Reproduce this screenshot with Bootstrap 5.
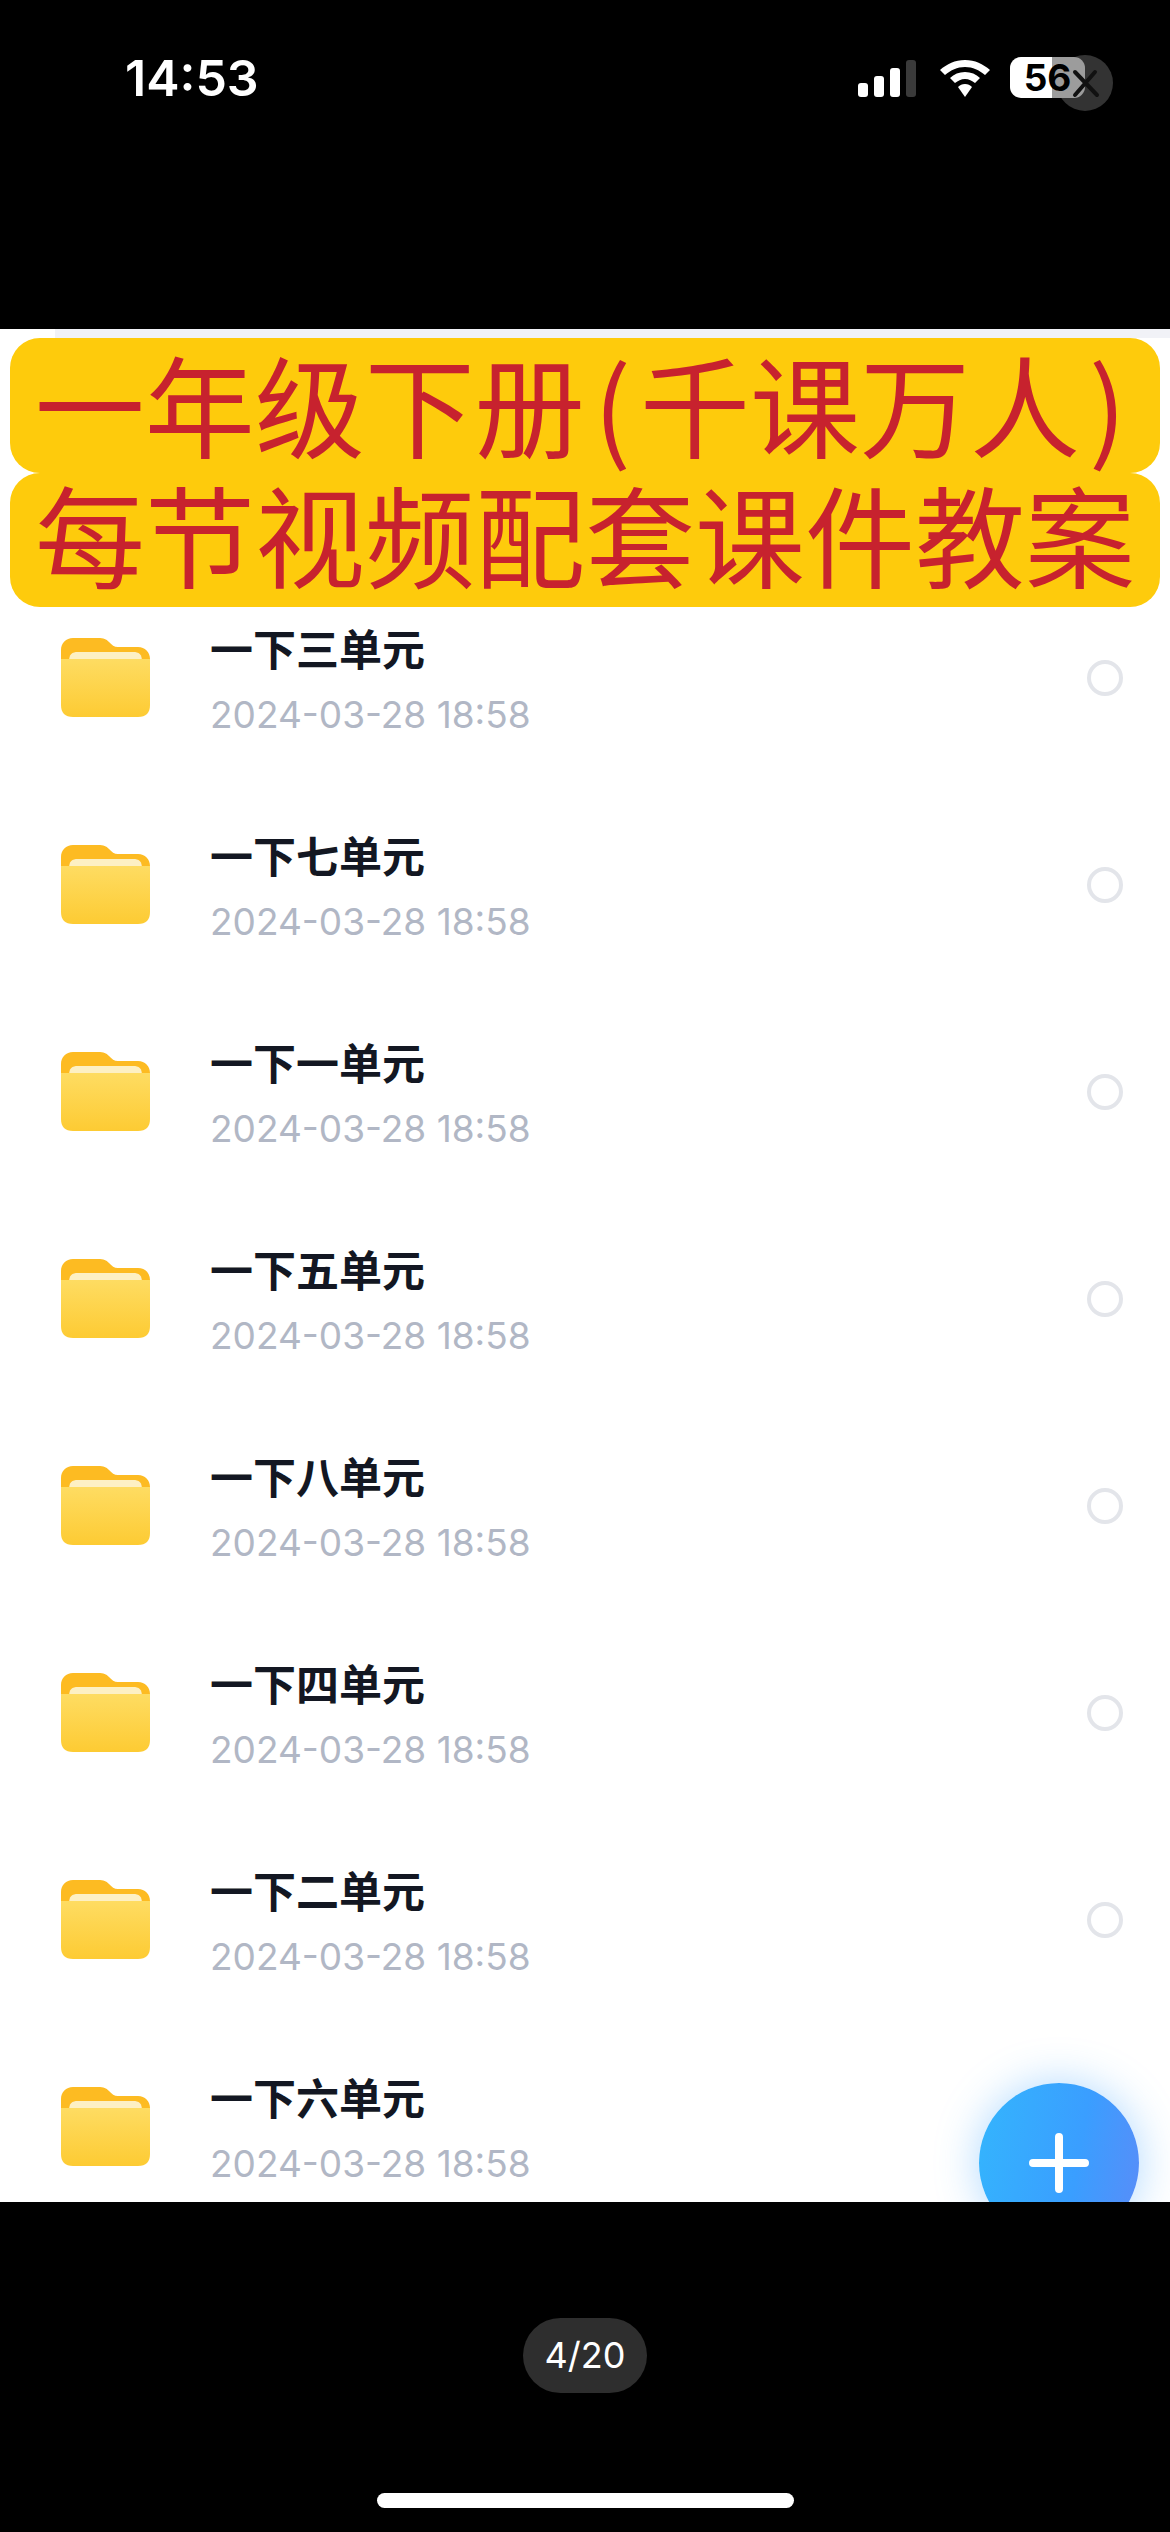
<!DOCTYPE html>
<html lang="zh-CN">

<head>
    <meta charset="UTF-8">
    <meta name="viewport" content="width=device-width, initial-scale=1.0">
    <title>一年级下册</title>
    <link href="https://cdn.jsdelivr.net/npm/bootstrap@5.3.0/dist/css/bootstrap.min.css" rel="stylesheet">
    <style>
        body {
            background-color: #000;
            width: 1170px;
            height: 2532px;
            overflow: hidden;
            font-family: "Inter", "Noto Sans CJK SC", sans-serif;
        }

        .status-area {
            height: 329px;
            padding: 48px 0 0 125px;
            position: relative;
        }

        .clock {
            color: #fff;
            font-size: 50px;
            line-height: 60px;
            font-weight: 600;
            width: 733px;
        }

        .status-icons {
            height: 60px;
        }

        .battery-pill {
            width: 75px;
            height: 41px;
            margin-left: 20px;
            margin-top: -2px;
            border-radius: 11px;
            background: linear-gradient(to right, #fff 56%, #9c9c9c 56%);
            color: #000;
            font-size: 37px;
            font-weight: 700;
            line-height: 41px;
            text-align: center;
            position: relative;
            z-index: 2;
        }

        .close-dot {
            position: absolute;
            left: 1057px;
            top: 55px;
            width: 56px;
            height: 56px;
            border-radius: 50%;
            background-color: #333;
        }

        .close-x {
            position: absolute;
            left: 1057px;
            top: 55px;
            z-index: 3;
        }

        .screen-panel {
            height: 1873px;
            background-color: #fff;
            overflow: hidden;
            position: relative;
        }

        .panel-edge {
            position: absolute;
            left: 55px;
            right: 0;
            top: 0;
            height: 9px;
            background-color: #f1f2f7;
        }

        .promo {
            position: absolute;
            left: 10px;
            top: 9px;
            width: 1150px;
            z-index: 2;
        }

        .promo-line {
            background-color: #fecb0c;
            color: #c7222e;
            border-radius: 30px;
            font-family: "Noto Sans CJK SC", sans-serif;
            font-size: 110px;
            font-weight: 400;
            text-align: center;
            white-space: nowrap;
        }

        .promo-top {
            height: 135px;
            line-height: 128px;
        }

        .promo-bottom {
            height: 134px;
            line-height: 118px;
        }

        .promo-paren {
            padding: 0 9px;
        }

        .folder-list {
            padding-top: 245px;
        }

        .folder-row {
            height: 207px;
            padding: 0 47px 0 61px;
            border: 0;
        }

        .folder-icon {
            width: 89px;
            height: 79px;
            margin-right: 60px;
            flex: none;
        }

        .folder-text {
            padding-top: 6px;
        }

        .folder-name {
            color: #131722;
            font-family: "Noto Sans CJK SC", sans-serif;
            font-size: 43px;
            font-weight: 600;
            line-height: 50px;
            margin-bottom: 18px;
        }

        .folder-date {
            color: #b1b7c5;
            font-family: "Inter", sans-serif;
            font-size: 37px;
            line-height: 50px;
        }

        .folder-row .form-check-input {
            width: 36px;
            height: 36px;
            margin: 0;
            border: 4px solid #e3e5ea;
            background-color: #fff;
        }

        .add-fab {
            position: absolute;
            left: 979px;
            top: 1754px;
            width: 160px;
            height: 160px;
            border: 0;
            padding: 0;
            border-radius: 50%;
            background: linear-gradient(100deg, #34b5fd, #3a9eff 60%, #5a8cf8);
            box-shadow: 0 0 44px rgba(58, 160, 255, .4);
            z-index: 3;
        }

        .bottom-area {
            height: 330px;
            padding-top: 116px;
        }

        .page-pill {
            width: 124px;
            height: 75px;
            background-color: #2e2e2e;
            color: #fff;
            font-size: 36px;
            line-height: 75px;
            text-align: center;
            margin-left: 523px;
        }

        .home-bar {
            width: 417px;
            height: 15px;
            background-color: #fff;
            margin: 100px 0 0 377px;
        }
    </style>
</head>

<body class="m-0">
    <svg width="0" height="0" class="position-absolute">
        <defs>
            <linearGradient id="folderFront" x1="0" y1="0" x2="0" y2="1">
                <stop offset="0" stop-color="#fedc62" />
                <stop offset="1" stop-color="#fdcb33" />
            </linearGradient>
            <symbol id="folder" viewBox="0 0 89 79">
                <path fill="#fdbb22" d="M0 40V12C0 5 5 0 12 0h25c6 0 8 1 11 4 3 3 5 5 9 5h20c7 0 12 5 12 12v19z" />
                <path fill="#fdf0c4" d="M8 24c0-8 3-10 9-10h55c6 0 9 2 9 10v2H8z" />
                <path fill="url(#folderFront)" d="M0 21h89v46c0 8-4 12-12 12H12C4 79 0 75 0 67z" />
            </symbol>
        </defs>
    </svg>

    <div class="status-area d-flex align-items-start">
        <div class="clock">14:53</div>
        <div class="status-icons d-flex align-items-center">
            <svg width="58" height="37" viewBox="0 0 58 37" class="d-block">
                <rect x="0" y="23" width="10" height="14" rx="3" fill="#fff" />
                <rect x="16" y="16" width="10" height="21" rx="3" fill="#fff" />
                <rect x="32" y="8" width="10" height="29" rx="3" fill="#fff" />
                <rect x="48" y="0" width="10" height="37" rx="3" fill="#3a3a3a" />
            </svg>
            <svg width="50" height="37" viewBox="0 0 50 37" class="d-block ms-4">
                <path fill="#fff" d="M25 0c10 0 18 4 25 10l-5 5C39 10 33 7 25 7S11 10 5 15l-5-5C7 4 15 0 25 0z" />
                <path fill="#fff" d="M25 12c6 0 11 2 15 6l-5 5c-3-2-6-4-10-4s-7 2-10 4l-5-5c4-4 9-6 15-6z" />
                <path fill="#fff" d="M25 24c3 0 5 1 7 3L25 37l-7-10c2-2 4-3 7-3z" />
            </svg>
            <div class="battery-pill">56</div>
        </div>
        <div class="close-dot"></div>
        <svg class="close-x" width="56" height="56" viewBox="0 0 56 56">
            <path d="M18 17l22 23M38 17L18 40" stroke="#111" stroke-width="4" stroke-linecap="round" fill="none" />
        </svg>
    </div>

    <div class="screen-panel">
        <div class="panel-edge"></div>
        <div class="promo">
            <div class="promo-line promo-top">一年级下册<span class="promo-paren">(</span>千课万人<span class="promo-paren">)</span></div>
            <div class="promo-line promo-bottom">每节视频配套课件教案</div>
        </div>

        <div class="list-group list-group-flush folder-list">
            <div class="list-group-item d-flex align-items-center folder-row">
                <svg class="folder-icon"><use href="#folder" /></svg>
                <div class="flex-grow-1 folder-text">
                    <div class="folder-name">一下三单元</div>
                    <div class="folder-date">2024-03-28 18:58</div>
                </div>
                <input class="form-check-input" type="radio" name="pick">
            </div>
            <div class="list-group-item d-flex align-items-center folder-row">
                <svg class="folder-icon"><use href="#folder" /></svg>
                <div class="flex-grow-1 folder-text">
                    <div class="folder-name">一下七单元</div>
                    <div class="folder-date">2024-03-28 18:58</div>
                </div>
                <input class="form-check-input" type="radio" name="pick">
            </div>
            <div class="list-group-item d-flex align-items-center folder-row">
                <svg class="folder-icon"><use href="#folder" /></svg>
                <div class="flex-grow-1 folder-text">
                    <div class="folder-name">一下一单元</div>
                    <div class="folder-date">2024-03-28 18:58</div>
                </div>
                <input class="form-check-input" type="radio" name="pick">
            </div>
            <div class="list-group-item d-flex align-items-center folder-row">
                <svg class="folder-icon"><use href="#folder" /></svg>
                <div class="flex-grow-1 folder-text">
                    <div class="folder-name">一下五单元</div>
                    <div class="folder-date">2024-03-28 18:58</div>
                </div>
                <input class="form-check-input" type="radio" name="pick">
            </div>
            <div class="list-group-item d-flex align-items-center folder-row">
                <svg class="folder-icon"><use href="#folder" /></svg>
                <div class="flex-grow-1 folder-text">
                    <div class="folder-name">一下八单元</div>
                    <div class="folder-date">2024-03-28 18:58</div>
                </div>
                <input class="form-check-input" type="radio" name="pick">
            </div>
            <div class="list-group-item d-flex align-items-center folder-row">
                <svg class="folder-icon"><use href="#folder" /></svg>
                <div class="flex-grow-1 folder-text">
                    <div class="folder-name">一下四单元</div>
                    <div class="folder-date">2024-03-28 18:58</div>
                </div>
                <input class="form-check-input" type="radio" name="pick">
            </div>
            <div class="list-group-item d-flex align-items-center folder-row">
                <svg class="folder-icon"><use href="#folder" /></svg>
                <div class="flex-grow-1 folder-text">
                    <div class="folder-name">一下二单元</div>
                    <div class="folder-date">2024-03-28 18:58</div>
                </div>
                <input class="form-check-input" type="radio" name="pick">
            </div>
            <div class="list-group-item d-flex align-items-center folder-row">
                <svg class="folder-icon"><use href="#folder" /></svg>
                <div class="flex-grow-1 folder-text">
                    <div class="folder-name">一下六单元</div>
                    <div class="folder-date">2024-03-28 18:58</div>
                </div>
            </div>
        </div>

        <button class="btn add-fab d-flex align-items-center justify-content-center" type="button" aria-label="add">
            <svg width="60" height="60" viewBox="0 0 60 60">
                <path d="M30 4v52M4 30h52" stroke="#fff" stroke-width="8" stroke-linecap="round" />
            </svg>
        </button>
    </div>

    <div class="bottom-area">
        <div class="page-pill rounded-pill">4/20</div>
        <div class="home-bar rounded-pill"></div>
    </div>
</body>

</html>
